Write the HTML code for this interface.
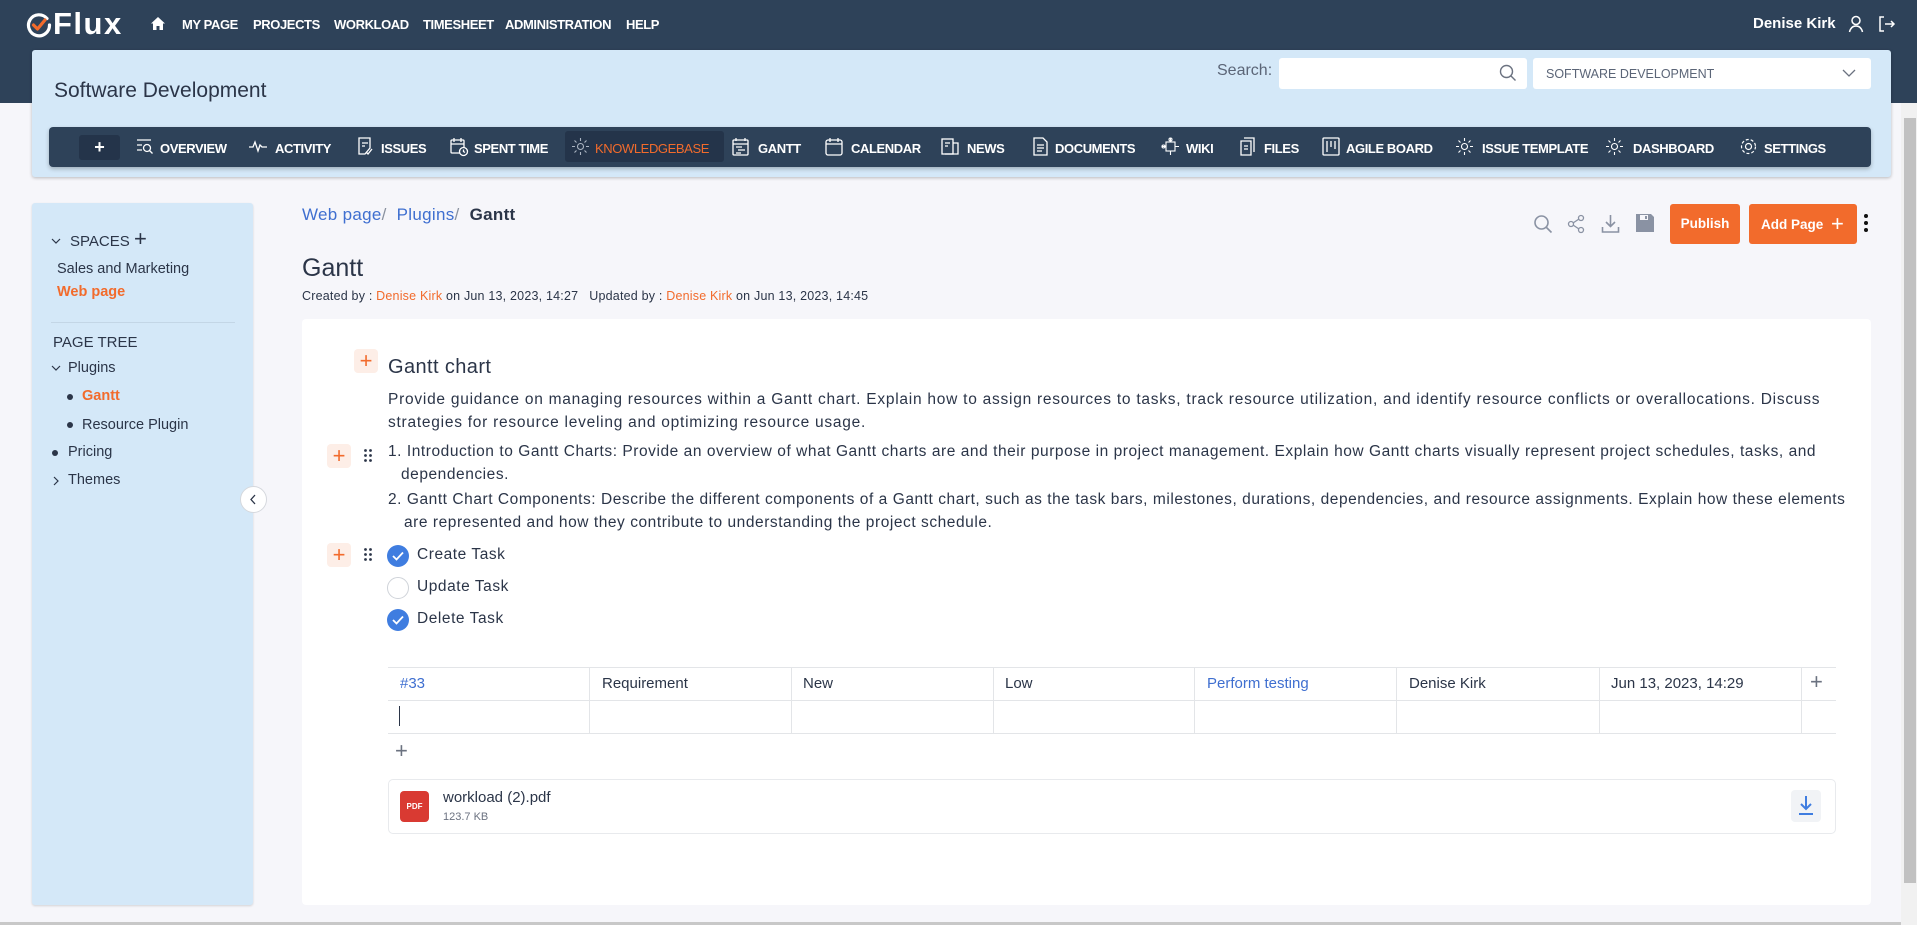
<!DOCTYPE html>
<html><head><meta charset="utf-8">
<style>
*{box-sizing:border-box;margin:0;padding:0}
body{width:1917px;height:925px;overflow:hidden;background:#f6f6fa;font-family:"Liberation Sans",sans-serif;color:#2b3548;position:relative}
.a{position:absolute;white-space:nowrap}
.top{left:0;top:0;width:1917px;height:103px;background:#2e4259}
.tm{top:17px;color:#fff;font-weight:bold;font-size:13px;letter-spacing:-0.4px}
.proj{left:32px;top:50px;width:1859px;height:127px;background:#d4e8f8;border-radius:3px;box-shadow:0 1px 3px rgba(0,0,0,.25)}
.nav{left:49px;top:127px;width:1822px;height:40px;background:#2e4259;border-radius:4px;box-shadow:0 2px 4px rgba(0,0,0,.25)}
.ni{top:141px;color:#fff;font-weight:bold;font-size:13px;letter-spacing:-0.4px}
.ic{top:137px}
.side{left:32px;top:203px;width:221px;height:702px;background:#d4e8f8;border-radius:3px;box-shadow:0 1px 2px rgba(0,0,0,.15)}
.st{font-size:14.5px;color:#2b3548}
.card{left:302px;top:319px;width:1569px;height:586px;background:#fff;border-radius:4px}
.p{font-size:15.5px;color:#2b3548;letter-spacing:0.55px}
.plus{width:24px;height:24px;background:#fdeee7;border-radius:4px;color:#f26b2c;font-size:22px;line-height:23px;text-align:center}
.cb{width:22px;height:22px;border-radius:50%;background:#3f7de0}
.cbo{width:22px;height:22px;border-radius:50%;border:1px solid #cfd3d9;background:#fff}
.td{font-size:15px;top:675px}
.vl{top:667px;width:1px;height:67px;background:#e3e5e8}
</style></head><body>
<div class="a top"></div>
<svg class="a" style="left:26px;top:12px" width="26" height="26" viewBox="0 0 26 26"><path d="M21 6.5A10.5 10.5 0 1 0 23.5 13" fill="none" stroke="#fff" stroke-width="3.2" stroke-linecap="round"/><path d="M7.5 13l4 4 7.5-9" fill="none" stroke="#f26b2c" stroke-width="3.2" stroke-linecap="round" stroke-linejoin="round"/></svg>
<div class="a" style="left:53px;top:6px;color:#fff;font-weight:bold;font-size:31px;letter-spacing:1.5px">Flux</div>
<svg class="a" style="left:150px;top:16px" width="16" height="15" viewBox="0 0 16 15"><path d="M8 1L1 7.5h2V14h3.5V10h3v4H13V7.5h2z" fill="#fff"/></svg>
<div class="a tm" style="left:182px">MY PAGE</div>
<div class="a tm" style="left:253px">PROJECTS</div>
<div class="a tm" style="left:334px">WORKLOAD</div>
<div class="a tm" style="left:423px">TIMESHEET</div>
<div class="a tm" style="left:505px">ADMINISTRATION</div>
<div class="a tm" style="left:626px">HELP</div>
<div class="a" style="left:1753px;top:15px;color:#fff;font-weight:bold;font-size:15px">Denise Kirk</div>
<svg class="a" style="left:1848px;top:15px" width="16" height="18" viewBox="0 0 16 18"><circle cx="8" cy="5.5" r="4" fill="none" stroke="#fff" stroke-width="1.5"/><path d="M1.5 17c1-4 3.5-6 6.5-6s5.5 2 6.5 6" fill="none" stroke="#fff" stroke-width="1.5"/></svg>
<svg class="a" style="left:1878px;top:15px" width="18" height="18" viewBox="0 0 18 18"><path d="M6 2H2v14h4" fill="none" stroke="#fff" stroke-width="1.5"/><path d="M7 9h9M13 6l3 3-3 3" fill="none" stroke="#fff" stroke-width="1.5"/></svg>

<div class="a proj"></div>
<div class="a" style="left:54px;top:79px;font-size:21px;color:#2b3548">Software Development</div>
<div class="a" style="left:1217px;top:62px;font-size:16px;color:#5b6577">Search:</div>
<div class="a" style="left:1279px;top:58px;width:248px;height:31px;background:#fff;border-radius:3px"></div>
<svg class="a" style="left:1499px;top:64px" width="18" height="18" viewBox="0 0 18 18"><circle cx="7.5" cy="7.5" r="6" fill="none" stroke="#6b7280" stroke-width="1.4"/><path d="M12 12l4.5 4.5" stroke="#6b7280" stroke-width="1.4"/></svg>
<div class="a" style="left:1533px;top:58px;width:338px;height:31px;background:#fff;border-radius:3px"></div>
<div class="a" style="left:1546px;top:67px;font-size:12.5px;color:#5b6577">SOFTWARE DEVELOPMENT</div>
<svg class="a" style="left:1842px;top:68px" width="14" height="10" viewBox="0 0 14 10"><path d="M1 2l6 6 6-6" fill="none" stroke="#6b7280" stroke-width="1.3"/></svg>

<div class="a nav"></div>
<div class="a" style="left:79px;top:135px;width:41px;height:25px;background:#24344a;border-radius:3px;color:#fff;font-weight:bold;font-size:18px;text-align:center;line-height:24px">+</div>
<svg class="a ic" style="left:136px" width="18" height="18" viewBox="0 0 18 18" fill="none" stroke="#fff" stroke-width="1.3"><path d="M1 3h14M1 8h5M1 13h5"/><circle cx="11" cy="11" r="3.5"/><path d="M13.5 13.5l3 3"/></svg>
<div class="a ni" style="left:160px">OVERVIEW</div>
<svg class="a ic" style="left:248px" width="20" height="18" viewBox="0 0 20 18" fill="none" stroke="#fff" stroke-width="1.3"><path d="M1 10h4l2-5 3 9 2-6 2 2h5"/></svg>
<div class="a ni" style="left:275px">ACTIVITY</div>
<svg class="a ic" style="left:357px" width="16" height="19" viewBox="0 0 16 19" fill="none" stroke="#fff" stroke-width="1.3"><path d="M2 1h11v10l-5 6H2z"/><path d="M5 6h6M5 9h3M9 15l2 2 4-5"/></svg>
<div class="a ni" style="left:381px">ISSUES</div>
<svg class="a ic" style="left:450px" width="19" height="20" viewBox="0 0 19 20" fill="none" stroke="#fff" stroke-width="1.3"><rect x="1" y="3" width="13" height="13" rx="1"/><path d="M4 1v4M11 1v4M1 7h13"/><circle cx="13.5" cy="14.5" r="4" fill="#2e4259"/><path d="M13.5 12.5v2l1.5 1"/></svg>
<div class="a ni" style="left:474px">SPENT TIME</div>
<div class="a" style="left:565px;top:131px;width:159px;height:31px;background:#24344a;border-radius:3px"></div>
<svg class="a ic" style="left:571px" width="19" height="19" viewBox="0 0 19 19" fill="none" stroke="#aab4c2" stroke-width="1.1"><circle cx="9.5" cy="9.5" r="3"/><path d="M9.5 1v3M9.5 15v3M1 9.5h3M15 9.5h3M3.5 3.5l2 2M13.5 13.5l2 2M3.5 15.5l2-2M13.5 5.5l2-2"/></svg>
<div class="a ni" style="left:595px;color:#f26b2c;font-weight:normal">KNOWLEDGEBASE</div>
<svg class="a ic" style="left:732px" width="17" height="19" viewBox="0 0 17 19" fill="none" stroke="#fff" stroke-width="1.3"><rect x="1" y="3" width="15" height="15" rx="1"/><path d="M4 1v3M13 1v3M1 7h15M4 10h6M6 13h7M4 16h5"/></svg>
<div class="a ni" style="left:758px">GANTT</div>
<svg class="a ic" style="left:825px" width="18" height="19" viewBox="0 0 18 19" fill="none" stroke="#fff" stroke-width="1.3"><rect x="1" y="3" width="16" height="15" rx="2"/><path d="M5 1v4M13 1v4M1 7h16"/></svg>
<div class="a ni" style="left:851px">CALENDAR</div>
<svg class="a ic" style="left:941px" width="19" height="19" viewBox="0 0 19 19" fill="none" stroke="#fff" stroke-width="1.3"><rect x="1" y="2" width="11" height="15"/><path d="M12 6h5v11H4M4 6h5M4 9h3"/></svg>
<div class="a ni" style="left:967px">NEWS</div>
<svg class="a ic" style="left:1033px" width="15" height="19" viewBox="0 0 15 19" fill="none" stroke="#fff" stroke-width="1.3"><path d="M1 1h9l4 4v13H1z"/><path d="M4 8h7M4 11h7M4 14h5"/></svg>
<div class="a ni" style="left:1055px">DOCUMENTS</div>
<svg class="a ic" style="left:1161px" width="19" height="19" viewBox="0 0 19 19" fill="none" stroke="#fff" stroke-width="1.1"><rect x="5" y="5" width="9" height="9"/><path d="M9.5 1v4M9.5 14v4M1 9.5h4M14 9.5h4"/><circle cx="9.5" cy="2.5" r="1.5"/><circle cx="2.5" cy="9.5" r="1.5"/></svg>
<div class="a ni" style="left:1186px">WIKI</div>
<svg class="a ic" style="left:1240px" width="16" height="19" viewBox="0 0 16 19" fill="none" stroke="#fff" stroke-width="1.3"><path d="M4 1h10v14M1 4h10v14H1z"/><path d="M4 9h4M4 12h4"/></svg>
<div class="a ni" style="left:1264px">FILES</div>
<svg class="a ic" style="left:1322px" width="18" height="19" viewBox="0 0 18 19" fill="none" stroke="#fff" stroke-width="1.3"><rect x="1" y="1" width="16" height="17" rx="1"/><path d="M5 4v11M9 4v6M13 4v8"/></svg>
<div class="a ni" style="left:1346px">AGILE BOARD</div>
<svg class="a ic" style="left:1455px" width="19" height="19" viewBox="0 0 19 19" fill="none" stroke="#fff" stroke-width="1.1"><circle cx="9.5" cy="9.5" r="3"/><path d="M9.5 1v3M9.5 15v3M1 9.5h3M15 9.5h3M3.5 3.5l2 2M13.5 13.5l2 2M3.5 15.5l2-2M13.5 5.5l2-2"/></svg>
<div class="a ni" style="left:1482px">ISSUE TEMPLATE</div>
<svg class="a ic" style="left:1605px" width="19" height="19" viewBox="0 0 19 19" fill="none" stroke="#fff" stroke-width="1.1"><circle cx="9.5" cy="9.5" r="3"/><path d="M9.5 1v3M9.5 15v3M1 9.5h3M15 9.5h3M3.5 3.5l2 2M13.5 13.5l2 2M3.5 15.5l2-2M13.5 5.5l2-2"/></svg>
<div class="a ni" style="left:1633px">DASHBOARD</div>
<svg class="a ic" style="left:1739px" width="19" height="19" viewBox="0 0 19 19" fill="none" stroke="#fff" stroke-width="1.2"><circle cx="9.5" cy="9.5" r="3"/><circle cx="9.5" cy="9.5" r="7" stroke-dasharray="3 2"/></svg>
<div class="a ni" style="left:1764px">SETTINGS</div>

<div class="a" style="left:1901px;top:103px;width:16px;height:822px;background:#f1f1f1"></div>
<div class="a" style="left:1904px;top:118px;width:12px;height:765px;background:#c1c1c1"></div>
<div class="a" style="left:0;top:922px;width:1901px;height:3px;background:#c8c8c8"></div>

<div class="a side"></div>
<svg class="a" style="left:51px;top:237px" width="10" height="8" viewBox="0 0 10 8"><path d="M1 2l4 4 4-4" fill="none" stroke="#2b3548" stroke-width="1.2"/></svg>
<div class="a st" style="left:70px;top:233px;font-size:15px">SPACES</div>
<div class="a" style="left:134px;top:226px;font-size:22px;color:#2b3548">+</div>
<div class="a st" style="left:57px;top:261px">Sales and Marketing</div>
<div class="a st" style="left:57px;top:284px;color:#f26b2c;font-weight:bold">Web page</div>
<div class="a" style="left:51px;top:322px;width:184px;height:1px;background:#c3d6e6"></div>
<div class="a st" style="left:53px;top:334px;font-size:15px">PAGE TREE</div>
<svg class="a" style="left:51px;top:364px" width="10" height="8" viewBox="0 0 10 8"><path d="M1 2l4 4 4-4" fill="none" stroke="#2b3548" stroke-width="1.2"/></svg>
<div class="a st" style="left:68px;top:360px">Plugins</div>
<div class="a" style="left:67px;top:394px;width:6px;height:6px;border-radius:50%;background:#2b3548"></div>
<div class="a st" style="left:82px;top:388px;color:#f26b2c;font-weight:bold">Gantt</div>
<div class="a" style="left:67px;top:422px;width:6px;height:6px;border-radius:50%;background:#2b3548"></div>
<div class="a st" style="left:82px;top:417px">Resource Plugin</div>
<div class="a" style="left:52px;top:450px;width:6px;height:6px;border-radius:50%;background:#2b3548"></div>
<div class="a st" style="left:68px;top:444px">Pricing</div>
<svg class="a" style="left:52px;top:476px" width="8" height="10" viewBox="0 0 8 10"><path d="M2 1l4 4-4 4" fill="none" stroke="#2b3548" stroke-width="1.2"/></svg>
<div class="a st" style="left:68px;top:472px">Themes</div>
<div class="a" style="left:240px;top:486px;width:27px;height:27px;border-radius:50%;background:#fff;border:1px solid #d5d8dd"></div>
<svg class="a" style="left:249px;top:494px" width="8" height="11" viewBox="0 0 8 11"><path d="M6 1L2 5.5 6 10" fill="none" stroke="#2b3548" stroke-width="1.3"/></svg>

<div class="a" style="left:302px;top:205px;font-size:17px;color:#3f6fd0;letter-spacing:0.3px">Web page<span style="color:#8a92a0">/ </span>&nbsp;Plugins<span style="color:#8a92a0">/ </span>&nbsp;<span style="color:#2b3548;font-weight:bold">Gantt</span></div>
<div class="a" style="left:302px;top:254px;font-size:25px;color:#2b3548">Gantt</div>
<div class="a" style="left:302px;top:289px;font-size:12.5px;color:#2b3548;letter-spacing:0.2px">Created by : <span style="color:#f26b2c">Denise Kirk</span> on Jun 13, 2023, 14:27 &nbsp;&nbsp;Updated by : <span style="color:#f26b2c">Denise Kirk</span> on Jun 13, 2023, 14:45</div>

<svg class="a" style="left:1533px;top:214px" width="20" height="20" viewBox="0 0 20 20" fill="none" stroke="#8a92a3" stroke-width="1.6"><circle cx="8.5" cy="8.5" r="6.5"/><path d="M13.5 13.5l5 5"/></svg>
<svg class="a" style="left:1567px;top:214px" width="19" height="20" viewBox="0 0 19 20" fill="none" stroke="#8a92a3" stroke-width="1.3"><circle cx="14" cy="4" r="2.5"/><circle cx="4" cy="10" r="2.5"/><circle cx="14" cy="16" r="2.5"/><path d="M6 9l6-4M6 11l6 4"/></svg>
<svg class="a" style="left:1601px;top:214px" width="19" height="20" viewBox="0 0 19 20" fill="none" stroke="#8a92a3" stroke-width="1.6"><path d="M9.5 1v11M5 8l4.5 4.5L14 8M1.5 13v5h16v-5"/></svg>
<svg class="a" style="left:1636px;top:214px" width="18" height="18" viewBox="0 0 18 18"><path d="M0 0h15l3 3v15H0z" fill="#8a92a3"/><rect x="4" y="1" width="8" height="5" fill="#f6f6fa"/><rect x="9" y="2" width="2" height="3" fill="#8a92a3"/></svg>
<div class="a" style="left:1670px;top:204px;width:70px;height:40px;background:#f26b2c;border-radius:3px;color:#fff;font-weight:bold;font-size:13.5px;text-align:center;line-height:40px">Publish</div>
<div class="a" style="left:1749px;top:204px;width:108px;height:40px;background:#f26b2c;border-radius:3px;color:#fff;font-weight:bold;font-size:13.5px;line-height:40px;padding-left:12px">Add Page <span style="font-size:22px;font-weight:normal;vertical-align:-2px;margin-left:4px">+</span></div>
<div class="a" style="left:1864px;top:214px;width:4px;height:4px;border-radius:50%;background:#111"></div>
<div class="a" style="left:1864px;top:221px;width:4px;height:4px;border-radius:50%;background:#111"></div>
<div class="a" style="left:1864px;top:228px;width:4px;height:4px;border-radius:50%;background:#111"></div>

<div class="a card"></div>
<div class="a plus" style="left:354px;top:349px">+</div>
<div class="a" style="left:388px;top:356px;font-size:20px;color:#2b3548;letter-spacing:0.4px">Gantt chart</div>
<div class="a p" style="left:388px;top:391px;letter-spacing:0.75px">Provide guidance on managing resources within a Gantt chart. Explain how to assign resources to tasks, track resource utilization, and identify resource conflicts or overallocations. Discuss</div>
<div class="a p" style="left:388px;top:414px;letter-spacing:0.75px">strategies for resource leveling and optimizing resource usage.</div>

<div class="a plus" style="left:327px;top:444px">+</div>
<svg class="a" style="left:364px;top:449px" width="8" height="13"><g fill="#2b3548"><circle cx="1.5" cy="1.5" r="1.4"/><circle cx="6.5" cy="1.5" r="1.4"/><circle cx="1.5" cy="6.5" r="1.4"/><circle cx="6.5" cy="6.5" r="1.4"/><circle cx="1.5" cy="11.5" r="1.4"/><circle cx="6.5" cy="11.5" r="1.4"/></g></svg>
<div class="a p" style="left:388px;top:443px">1. Introduction to Gantt Charts: Provide an overview of what Gantt charts are and their purpose in project management. Explain how Gantt charts visually represent project schedules, tasks, and</div>
<div class="a p" style="left:401px;top:466px">dependencies.</div>
<div class="a p" style="left:388px;top:491px">2. Gantt Chart Components: Describe the different components of a Gantt chart, such as the task bars, milestones, durations, dependencies, and resource assignments. Explain how these elements</div>
<div class="a p" style="left:404px;top:514px">are represented and how they contribute to understanding the project schedule.</div>

<div class="a plus" style="left:327px;top:543px">+</div>
<svg class="a" style="left:364px;top:548px" width="8" height="13"><g fill="#2b3548"><circle cx="1.5" cy="1.5" r="1.4"/><circle cx="6.5" cy="1.5" r="1.4"/><circle cx="1.5" cy="6.5" r="1.4"/><circle cx="6.5" cy="6.5" r="1.4"/><circle cx="1.5" cy="11.5" r="1.4"/><circle cx="6.5" cy="11.5" r="1.4"/></g></svg>
<div class="a cb" style="left:387px;top:545px"></div><svg class="a" style="left:392px;top:551px" width="12" height="10"><path d="M1 5l3.5 3.5L11 1.5" fill="none" stroke="#fff" stroke-width="1.8"/></svg>
<div class="a p" style="left:417px;top:546px">Create Task</div>
<div class="a cbo" style="left:387px;top:577px"></div>
<div class="a p" style="left:417px;top:578px">Update Task</div>
<div class="a cb" style="left:387px;top:609px"></div><svg class="a" style="left:392px;top:615px" width="12" height="10"><path d="M1 5l3.5 3.5L11 1.5" fill="none" stroke="#fff" stroke-width="1.8"/></svg>
<div class="a p" style="left:417px;top:610px">Delete Task</div>

<div class="a" style="left:388px;top:667px;width:1448px;height:1px;background:#e3e5e8"></div>
<div class="a" style="left:388px;top:700px;width:1448px;height:1px;background:#e3e5e8"></div>
<div class="a" style="left:388px;top:733px;width:1448px;height:1px;background:#e3e5e8"></div>
<div class="a vl" style="left:589px"></div><div class="a vl" style="left:791px"></div><div class="a vl" style="left:993px"></div><div class="a vl" style="left:1194px"></div><div class="a vl" style="left:1396px"></div><div class="a vl" style="left:1599px"></div><div class="a vl" style="left:1801px"></div>
<div class="a td" style="left:400px;color:#3f6fd0">#33</div>
<div class="a td" style="left:602px">Requirement</div>
<div class="a td" style="left:803px">New</div>
<div class="a td" style="left:1005px">Low</div>
<div class="a td" style="left:1207px;color:#3f6fd0">Perform testing</div>
<div class="a td" style="left:1409px">Denise Kirk</div>
<div class="a td" style="left:1611px">Jun 13, 2023, 14:29</div>
<div class="a" style="left:1810px;top:669px;font-size:22px;color:#6b7280">+</div>
<div class="a" style="left:399px;top:706px;width:1px;height:20px;background:#2b3548"></div>
<div class="a" style="left:395px;top:738px;font-size:22px;color:#6b7280">+</div>

<div class="a" style="left:388px;top:779px;width:1448px;height:55px;border:1px solid #e8eaed;border-radius:5px;background:#fff"></div>
<div class="a" style="left:400px;top:791px;width:29px;height:31px;background:#d93a32;border-radius:4px;color:#fff;font-size:8px;font-weight:bold;text-align:center;line-height:31px">PDF</div>
<div class="a" style="left:443px;top:789px;font-size:15px;color:#2b3548">workload (2).pdf</div>
<div class="a" style="left:443px;top:811px;font-size:11px;color:#6b7280">123.7 KB</div>
<div class="a" style="left:1791px;top:790px;width:30px;height:32px;background:#f1f3f6;border-radius:4px"></div>
<svg class="a" style="left:1797px;top:795px" width="18" height="21" viewBox="0 0 18 21" fill="none" stroke="#3f7de0" stroke-width="2"><path d="M9 1v13M4 9l5 5 5-5M2 19h14"/></svg>
</body></html>
